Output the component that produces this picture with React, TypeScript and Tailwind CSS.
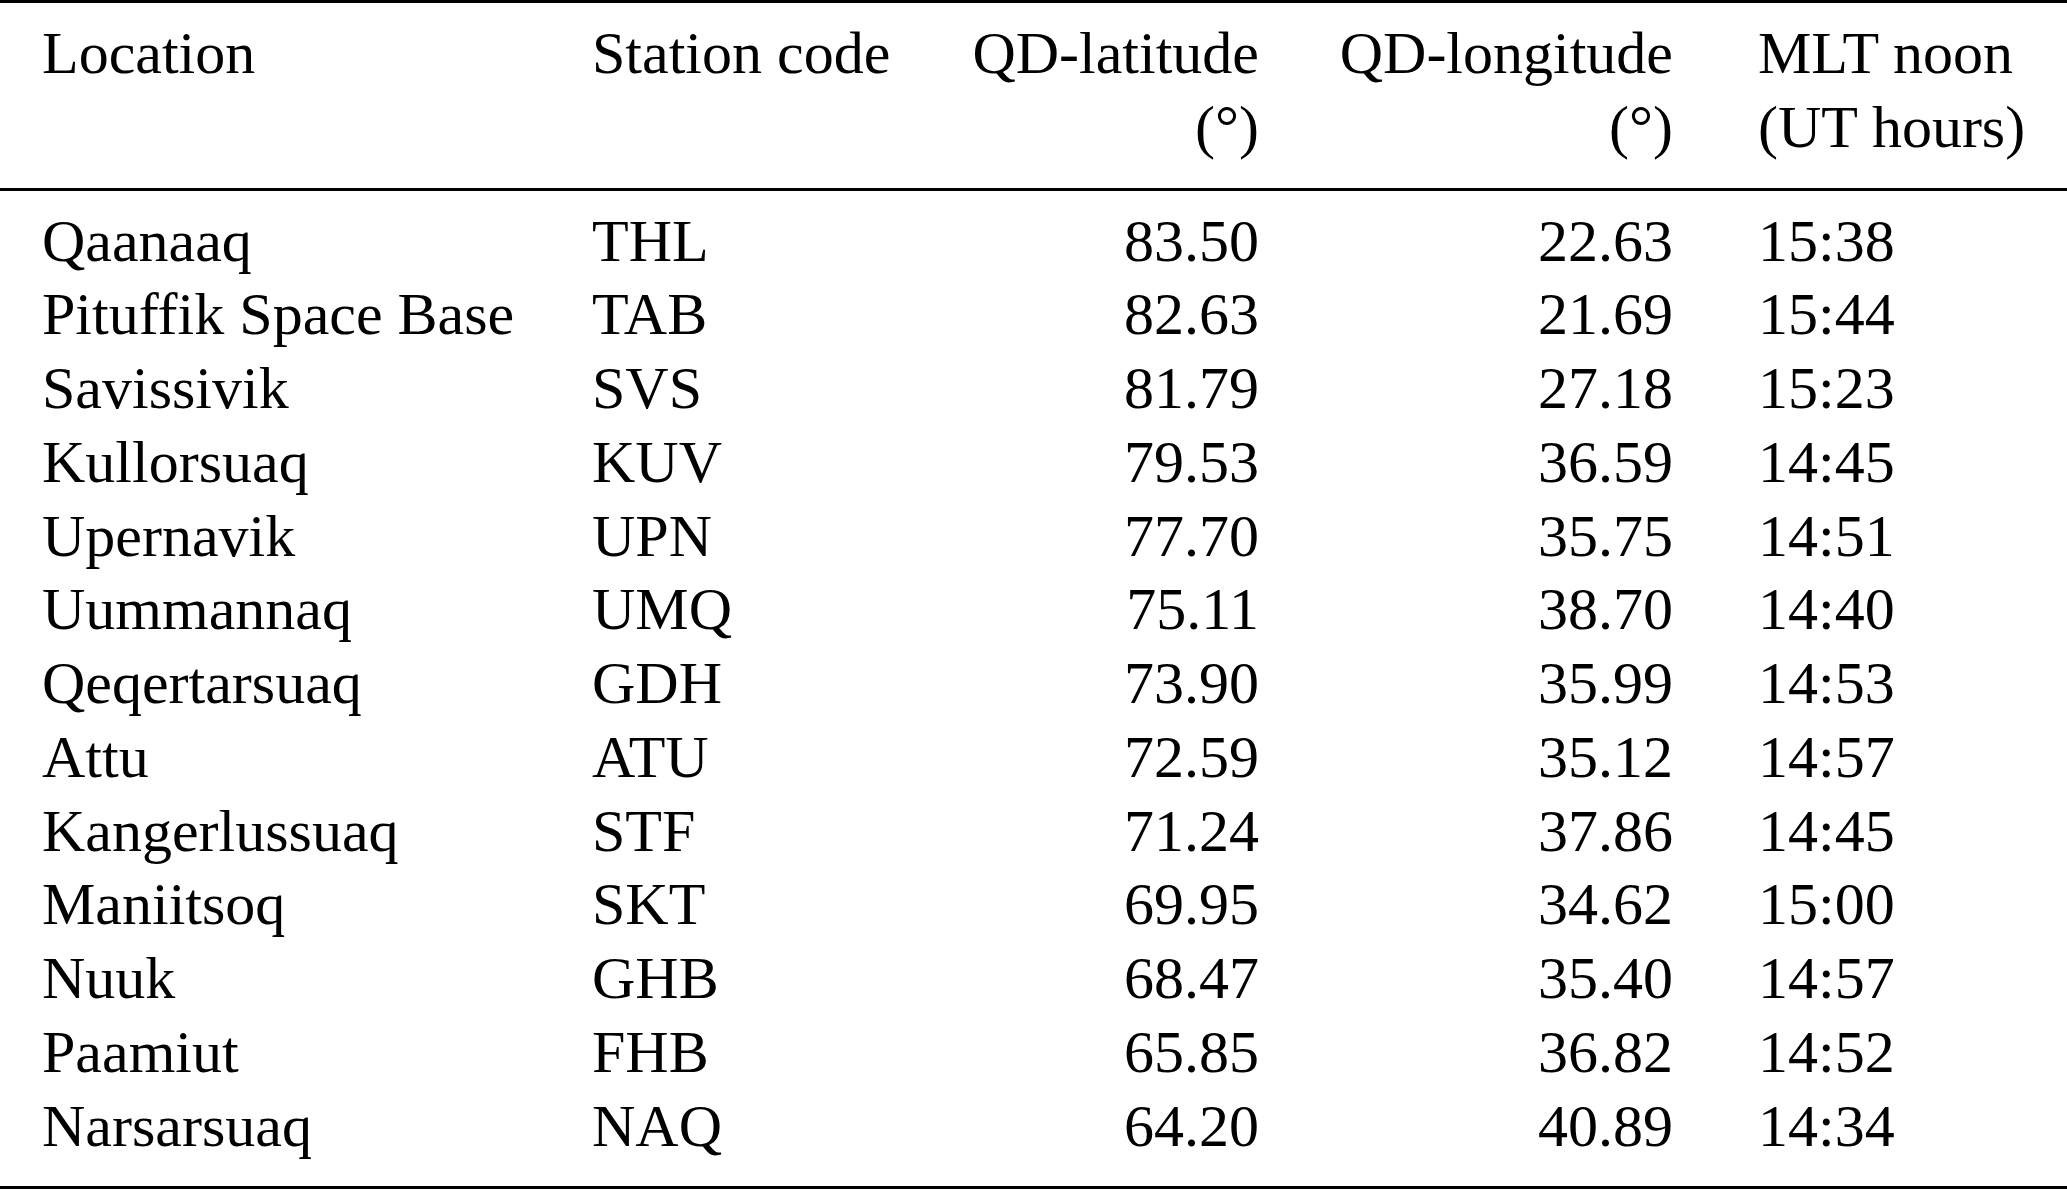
const rows: [string, string, string, string, string][] = [
  ['Qaanaaq', 'THL', '83.50', '22.63', '15:38'],
  ['Pituffik Space Base', 'TAB', '82.63', '21.69', '15:44'],
  ['Savissivik', 'SVS', '81.79', '27.18', '15:23'],
  ['Kullorsuaq', 'KUV', '79.53', '36.59', '14:45'],
  ['Upernavik', 'UPN', '77.70', '35.75', '14:51'],
  ['Uummannaq', 'UMQ', '75.11', '38.70', '14:40'],
  ['Qeqertarsuaq', 'GDH', '73.90', '35.99', '14:53'],
  ['Attu', 'ATU', '72.59', '35.12', '14:57'],
  ['Kangerlussuaq', 'STF', '71.24', '37.86', '14:45'],
  ['Maniitsoq', 'SKT', '69.95', '34.62', '15:00'],
  ['Nuuk', 'GHB', '68.47', '35.40', '14:57'],
  ['Paamiut', 'FHB', '65.85', '36.82', '14:52'],
  ['Narsarsuaq', 'NAQ', '64.20', '40.89', '14:34'],
];

// shared column template so header and body line up
const GRID = 'grid grid-cols-[550px_300px_367px_414px_1fr] pl-[42px] pr-[43px]';

export default function App() {
  return (
    <div
      className="min-h-screen w-[2067px] bg-white text-black text-[60px] leading-[73.75px]"
      style={{ fontFamily: '"Liberation Serif", "Times New Roman", serif' }}
    >
      <div className="border-t-[3px] border-black" />

      {/* Header */}
      <div className={`${GRID} pt-[14px] pb-[23px]`}>
        <div>Location</div>
        <div>Station code</div>
        <div className="text-right">
          <div>QD-latitude</div>
          <div>(°)</div>
        </div>
        <div className="text-right">
          <div>QD-longitude</div>
          <div>(°)</div>
        </div>
        <div className="pl-[85px] whitespace-nowrap">
          <div>MLT noon</div>
          <div>(UT hours)</div>
        </div>
      </div>

      <div className="border-t-[3px] border-black" />

      {/* Body */}
      <div className="pt-[14px] pb-[23px]">
        {rows.map(([loc, code, lat, lon, mlt]) => (
          <div key={code} className={GRID}>
            <div className="whitespace-nowrap">{loc}</div>
            <div>{code}</div>
            <div className="text-right">{lat}</div>
            <div className="text-right">{lon}</div>
            <div className="pl-[85px]">{mlt}</div>
          </div>
        ))}
      </div>

      <div className="border-t-[3px] border-black" />
    </div>
  );
}
